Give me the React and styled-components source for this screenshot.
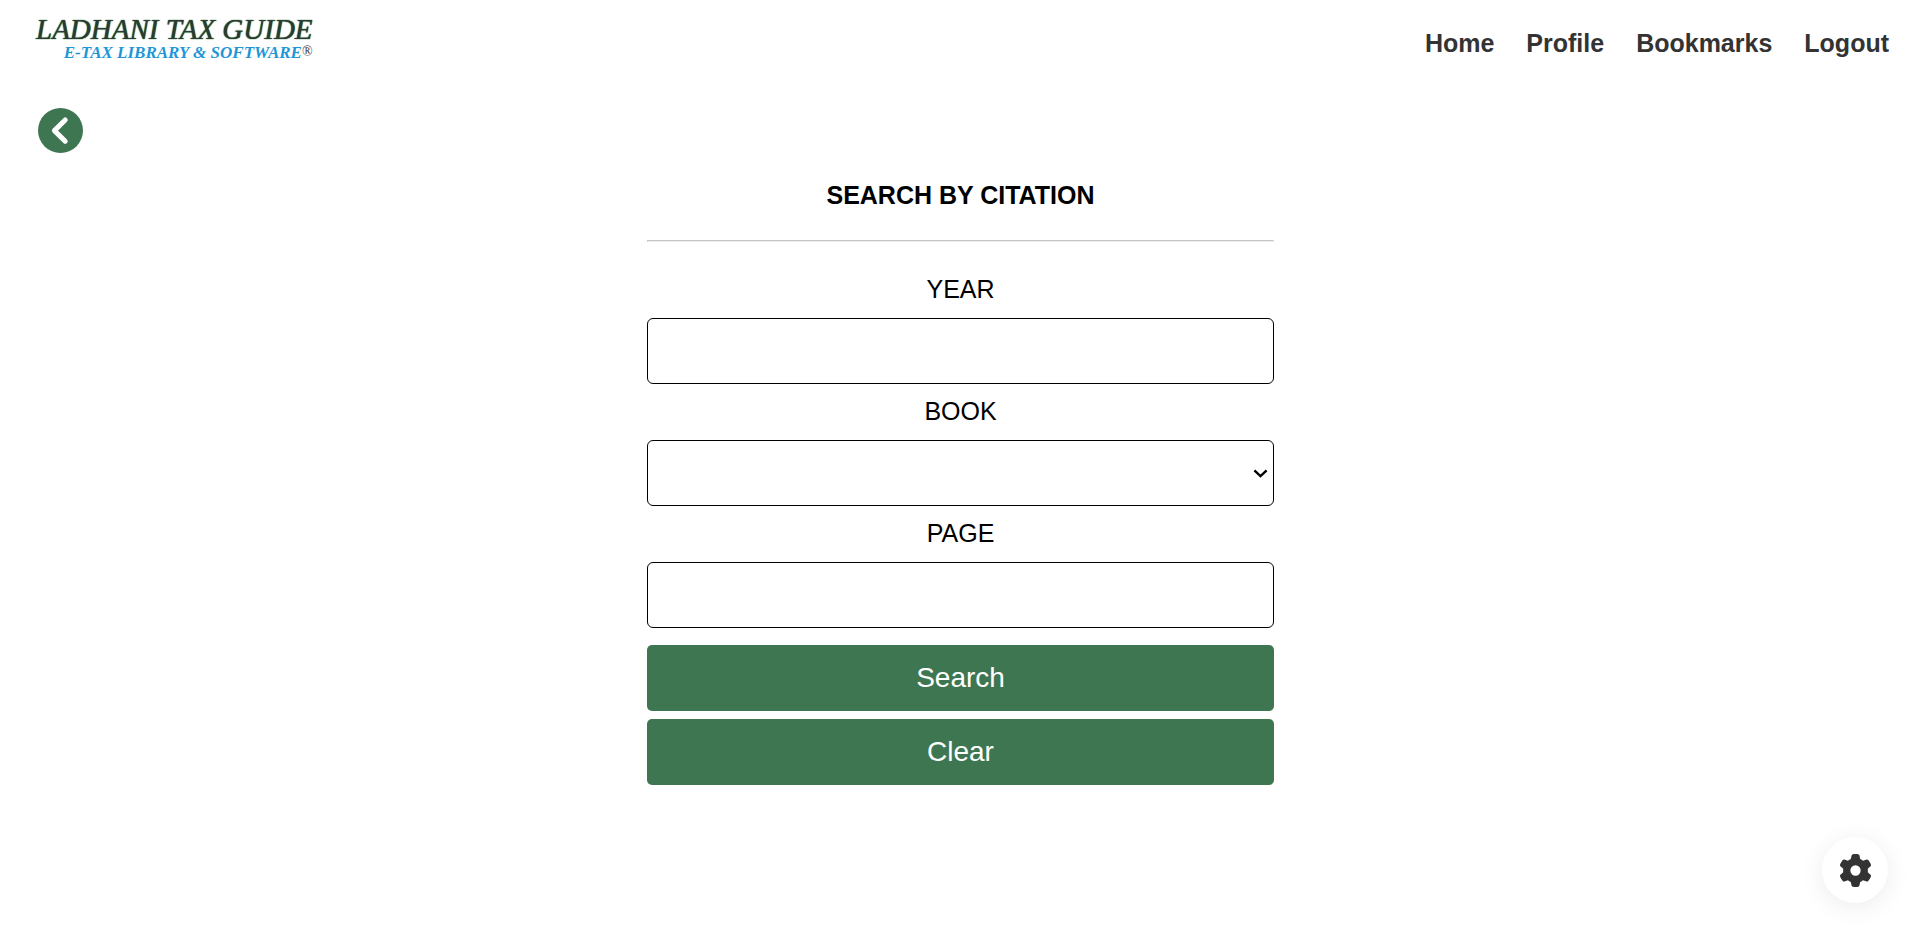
import React from "react";
import styled, { createGlobalStyle } from "styled-components";
import { FaGear } from "react-icons/fa6";

const GlobalStyle = createGlobalStyle`
  *, *::before, *::after { box-sizing: border-box; }
  body {
    margin: 0;
    background: #fff;
    color: #000;
    font-family: "Liberation Sans", Arial, sans-serif;
    font-size: 25px;
    line-height: 30px;
  }
`;

const Header = styled.header`
  display: flex;
  align-items: flex-start;
  justify-content: space-between;
  padding: 14px 32px 0 36px;
`;

const Logo = styled.a`
  display: flex;
  flex-direction: column;
  align-items: flex-end;
  font-family: "Liberation Serif", "Times New Roman", serif;
  font-style: italic;
  text-decoration: none;
  white-space: nowrap;
`;

const LogoName = styled.span`
  font-size: 29px;
  line-height: 30px;
  color: #2c3a33;
  text-shadow: 0 0 1px #2f7a35, 0 0 1px #2f5a35;
`;

const LogoTagline = styled.span`
  font-size: 17px;
  line-height: 18px;
  font-weight: 700;
  color: #2196d6;
`;

const Registered = styled.span`
  font-size: 14px;
  font-style: normal;
  font-weight: 400;
  line-height: 12px;
  vertical-align: 2px;
  color: #333;
`;

const Nav = styled.nav`
  display: flex;
  gap: 32px;
  padding-top: 14px;
`;

const NavLink = styled.a`
  color: #333;
  font-weight: 700;
  text-decoration: none;
`;

const BackRow = styled.div`
  display: flex;
  padding: 46px 38px 0;
`;

const BackButton = styled.button`
  display: flex;
  padding: 0;
  border: 0;
  border-radius: 50%;
  background: #3f7652;
  cursor: pointer;
`;

const BackIcon = styled.svg`
  width: 45px;
  height: 45px;
  fill: none;
  stroke: #fff;
  stroke-width: 5;
  stroke-linecap: round;
  stroke-linejoin: round;
`;

const Main = styled.main`
  display: grid;
  grid-template-columns: repeat(3, 1fr);
  padding: 27px 20px 32px;
`;

const Form = styled.form`
  grid-column: 2;
  display: flex;
  flex-direction: column;
`;

const Title = styled.h1`
  margin: 0;
  font-size: 25px;
  line-height: 30px;
  text-align: center;
`;

const Divider = styled.hr`
  width: 100%;
  margin: 30px 0 20px;
  border: 1px solid;
  border-color: #c4c4c4 #eee #eee #c4c4c4;
`;

const Field = styled.div`
  display: flex;
  flex-direction: column;
  gap: 14px;
  padding-top: 12px;
`;

const Label = styled.label`
  text-align: center;
`;

const Input = styled.input`
  width: 100%;
  height: 66px;
  padding: 0 16px;
  border: 1px solid #000;
  border-radius: 6px;
  background: #fff;
  font: inherit;
`;

const SelectBox = styled.div`
  position: relative;
`;

const Select = styled(Input).attrs({ as: "select" })`
  display: block;
  appearance: none;
`;

const SelectArrow = styled.svg`
  position: absolute;
  top: 29px;
  right: 6px;
  width: 15px;
  height: 10px;
  pointer-events: none;
`;

const Actions = styled.div`
  display: flex;
  flex-direction: column;
  gap: 8px;
  padding-top: 17px;
`;

const ActionButton = styled.button`
  height: 66px;
  border: 0;
  border-radius: 5px;
  background: #3f7652;
  color: #fff;
  font-family: inherit;
  font-size: 28px;
  cursor: pointer;
`;

const SettingsButton = styled.button`
  position: fixed;
  right: 33px;
  bottom: 32px;
  display: flex;
  align-items: center;
  justify-content: center;
  width: 66px;
  height: 66px;
  padding: 0;
  border: 0;
  border-radius: 50%;
  background: #fff;
  color: #333;
  font-size: 33px;
  box-shadow: 0 4px 25px rgba(0, 0, 0, 0.08);
  cursor: pointer;
`;

const links = ["Home", "Profile", "Bookmarks", "Logout"];

export default function App() {
  return (
    <>
      <GlobalStyle />
      <Header>
        <Logo href="#">
          <LogoName>LADHANI TAX GUIDE</LogoName>
          <LogoTagline>
            E-TAX LIBRARY &amp; SOFTWARE<Registered>®</Registered>
          </LogoTagline>
        </Logo>
        <Nav>
          {links.map((name) => (
            <NavLink key={name} href={`#${name.toLowerCase()}`}>{name}</NavLink>
          ))}
        </Nav>
      </Header>
      <BackRow>
        <BackButton type="button" aria-label="Back">
          <BackIcon viewBox="0 0 45 45" aria-hidden="true">
            <path d="M27.2 12 16.4 22.6 27.2 33.2" />
          </BackIcon>
        </BackButton>
      </BackRow>
      <Main>
        <Form onSubmit={(event) => event.preventDefault()}>
          <Title>SEARCH BY CITATION</Title>
          <Divider />
          <Field>
            <Label htmlFor="year">YEAR</Label>
            <Input id="year" type="text" />
          </Field>
          <Field>
            <Label htmlFor="book">BOOK</Label>
            <SelectBox>
              <Select id="book" defaultValue="">
                <option value="" />
              </Select>
              <SelectArrow viewBox="0 0 15 10" aria-hidden="true">
                <path d="M1.4 1.4 7.5 7.2 13.6 1.4" fill="none" stroke="#000" strokeWidth="2.3" />
              </SelectArrow>
            </SelectBox>
          </Field>
          <Field>
            <Label htmlFor="page">PAGE</Label>
            <Input id="page" type="text" />
          </Field>
          <Actions>
            <ActionButton type="submit">Search</ActionButton>
            <ActionButton type="reset">Clear</ActionButton>
          </Actions>
        </Form>
      </Main>
      <SettingsButton type="button" aria-label="Settings">
        <FaGear />
      </SettingsButton>
    </>
  );
}
